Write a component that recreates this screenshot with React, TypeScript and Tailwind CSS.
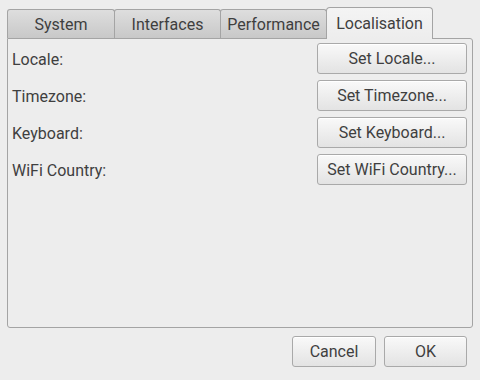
const tabs = ['System', 'Interfaces', 'Performance'];

const rows = [
  { label: 'Locale:', action: 'Set Locale...' },
  { label: 'Timezone:', action: 'Set Timezone...' },
  { label: 'Keyboard:', action: 'Set Keyboard...' },
  { label: 'WiFi Country:', action: 'Set WiFi Country...' },
];

const btn =
  'flex items-center justify-center pt-px border border-[#a9a9a9] rounded-[3px] bg-gradient-to-b from-[#f9f9f9] to-[#e3e3e3] text-[#3f3f3f] shadow-[inset_0_1px_0_#ffffff]';

export default function App() {
  return (
    <div className="w-[480px] h-[380px] bg-[#ededed] text-[16px] text-[#3f3f3f] font-['Roboto',sans-serif] pt-[7px] px-[7px] flex flex-col">
      <div className="flex items-end h-[31px]">
        {tabs.map((t, i) => (
          <div
            key={t}
            className={
              'h-[29px] pt-[2px] flex items-center justify-center border border-b-0 border-[#a4a4a4] rounded-t-[3px] bg-gradient-to-b from-[#dedede] to-[#c8c8c8] ' +
              (i === 0 ? 'w-[108px]' : 'w-[107px] -ml-px')
            }
          >
            {t}
          </div>
        ))}
        <div className="relative z-10 -ml-px -mb-px h-[32px] w-[107px] flex items-center justify-center border border-b-0 border-[#a4a4a4] rounded-t-[4px] bg-gradient-to-b from-[#f4f4f4] to-[#ededed]">
          Localisation
        </div>
      </div>
      <div className="w-[466px] h-[290px] border border-[#a4a4a4] rounded-b-[3px] rounded-tr-[3px] pt-[4px] pl-[4px] pr-[5px] flex flex-col gap-[6px]">
        {rows.map((r) => (
          <div key={r.label} className="flex items-center justify-between">
            <span className="pt-[2px]">{r.label}</span>
            <button className={btn + ' w-[150px] h-[31px]'}>{r.action}</button>
          </div>
        ))}
      </div>
      <div className="flex justify-end gap-[8px] pt-[8px] pr-[6px]">
        <button className={btn + ' w-[84px] h-[31px]'}>Cancel</button>
        <button className={btn + ' w-[83px] h-[31px]'}>OK</button>
      </div>
    </div>
  );
}
